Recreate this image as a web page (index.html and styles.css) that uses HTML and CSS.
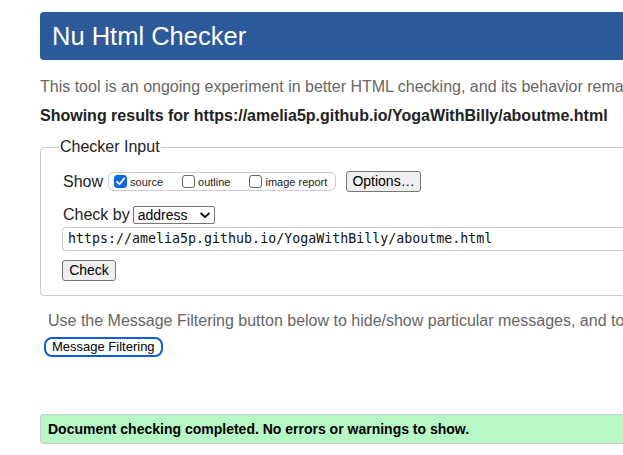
FILE: index.html
```html
<!DOCTYPE html>
<html>
<head>
<meta charset="utf-8">
<link rel="stylesheet" href="styles.css">
</head>
<body>
<div class="page">
  <h1 class="banner">Nu Html Checker</h1>
  <p class="intro">This tool is an ongoing experiment in better HTML checking, and its behavior remains subject to change</p>
  <p class="results">Showing results for https://amelia5p.github.io/YogaWithBilly/aboutme.html</p>
  <fieldset class="input-box">
    <legend class="legend">Checker Input</legend>
    <div class="row show-row">
      <span class="label">Show</span>
      <span class="pill">
        <label class="opt"><span class="cb checked"><svg width="13" height="13" viewBox="0 0 13 13"><path d="M3 6.8 L5.5 9.2 L10.2 3.4" fill="none" stroke="#fff" stroke-width="1.8" stroke-linecap="round" stroke-linejoin="round"/></svg></span>source</label>
        <label class="opt"><span class="cb"></span>outline</label>
        <label class="opt"><span class="cb"></span>image report</label>
      </span>
      <span class="btn options">Options…</span>
    </div>
    <div class="row check-row">
      <span class="label">Check by</span>
      <span class="select">address<svg class="chev" width="10" height="7" viewBox="0 0 10 7"><path d="M1.2 1.5 L5 5.2 L8.8 1.5" fill="none" stroke="#000" stroke-width="1.8" stroke-linecap="round" stroke-linejoin="round"/></svg></span>
    </div>
    <div class="url">https://amelia5p.github.io/YogaWithBilly/aboutme.html</div>
    <div class="row"><span class="btn check">Check</span></div>
  </fieldset>
  <p class="filter-note">Use the Message Filtering button below to hide/show particular messages, and to see total counts of errors and warnings.</p>
  <span class="filter-btn">Message Filtering</span>
  <div class="success">Document checking completed. No errors or warnings to show.</div>
</div>
</body>
</html>
```
FILE: styles.css
```css
html, body {
  margin: 0;
  padding: 0;
  overflow: hidden;
  background: #fff;
}
body {
  font-family: "Liberation Sans", Arial, sans-serif;
  color: #000;
}
.page {
  width: 800px;
  padding: 12px 0 0 40px;
}
.banner {
  margin: 0;
  height: 48px;
  box-sizing: border-box;
  background: #2c5a9a;
  color: #fff;
  border-radius: 4px;
  font-size: 25.5px;
  font-weight: normal;
  line-height: 48px;
  padding-left: 12px;
}
.intro {
  margin: 17px 0 0;
  font-size: 16px;
  line-height: 20px;
  color: #666;
  white-space: nowrap;
}
.results {
  margin: 9px 0 0;
  font-size: 16px;
  line-height: 20px;
  font-weight: bold;
  color: #222;
  white-space: nowrap;
}
.input-box {
  margin: 12px 0 0;
  border: 1px solid #ccc;
  border-radius: 4px;
  padding: 2px 0 14px 22px;
  min-width: 0;
}
.legend {
  font-size: 16px;
  padding: 0 1px;
  margin-left: -4px;
  color: #222;
}
.row {
  display: flex;
  align-items: center;
}
.show-row {
  margin-top: 13px;
}
.label {
  font-size: 16px;
  color: #222;
}
.pill {
  display: inline-flex;
  align-items: center;
  margin-left: 5px;
  height: 19px;
  width: 228px;
  box-sizing: border-box;
  border: 1px solid #ccc;
  border-radius: 6px;
  padding-left: 5px;
  font-size: 11px;
  white-space: nowrap;
  flex-shrink: 0;
}
.opt {
  display: inline-flex;
  align-items: center;
  color: #222;
  margin-right: 19px;
  white-space: nowrap;
}
.cb {
  display: inline-block;
  flex-shrink: 0;
  width: 11px;
  height: 11px;
  border: 1px solid #666;
  border-radius: 3px;
  margin-right: 3px;
  background: #fff;
  position: relative;
}
.cb.checked {
  background: #0b68e8;
  border-color: #0b68e8;
}
.cb svg {
  position: absolute;
  left: -1px;
  top: -1px;
}
.btn {
  display: inline-block;
  box-sizing: border-box;
  border: 1px solid #767676;
  border-radius: 3px;
  background: #efefef;
  font-size: 14px;
  color: #000;
  line-height: 19px;
  text-align: center;
}
.options {
  margin-left: 10px;
  width: 75px;
  height: 21px;
}
.check-row {
  margin-top: 14px;
}
.select {
  display: inline-flex;
  align-items: center;
  justify-content: space-between;
  margin-left: 3px;
  width: 82px;
  height: 18px;
  box-sizing: border-box;
  border: 1px solid #767676;
  border-radius: 2px;
  padding: 0 4px 0 4px;
  font-size: 14px;
  color: #000;
}
.url {
  margin-top: 3px;
  height: 24px;
  box-sizing: border-box;
  border: 1px solid #ccc;
  border-right: none;
  border-radius: 4px 0 0 4px;
  font-family: "DejaVu Sans Mono", "Liberation Mono", monospace;
  font-size: 13.3px;
  line-height: 22px;
  padding-left: 5px;
  color: #111;
  margin-left: -1px;
}
.check {
  margin-top: 9px;
  margin-left: -1px;
  width: 54px;
  height: 21px;
}
.filter-note {
  margin: 15px 0 0 8px;
  font-size: 16px;
  line-height: 20px;
  color: #666;
  white-space: nowrap;
}
.filter-btn {
  display: inline-block;
  margin: 6px 0 0 4px;
  box-sizing: border-box;
  height: 20px;
  border: 2px solid #0b5ed7;
  border-radius: 8px;
  padding: 0 6px;
  font-size: 13px;
  line-height: 16px;
  color: #000;
  background: #fff;
}
.success {
  margin-top: 57px;
  height: 30px;
  box-sizing: border-box;
  background: #b8f7c6;
  border: 1px solid #ccc;
  border-radius: 3px;
  padding-left: 7px;
  font-size: 14px;
  font-weight: bold;
  line-height: 28px;
  color: #000;
}
```
